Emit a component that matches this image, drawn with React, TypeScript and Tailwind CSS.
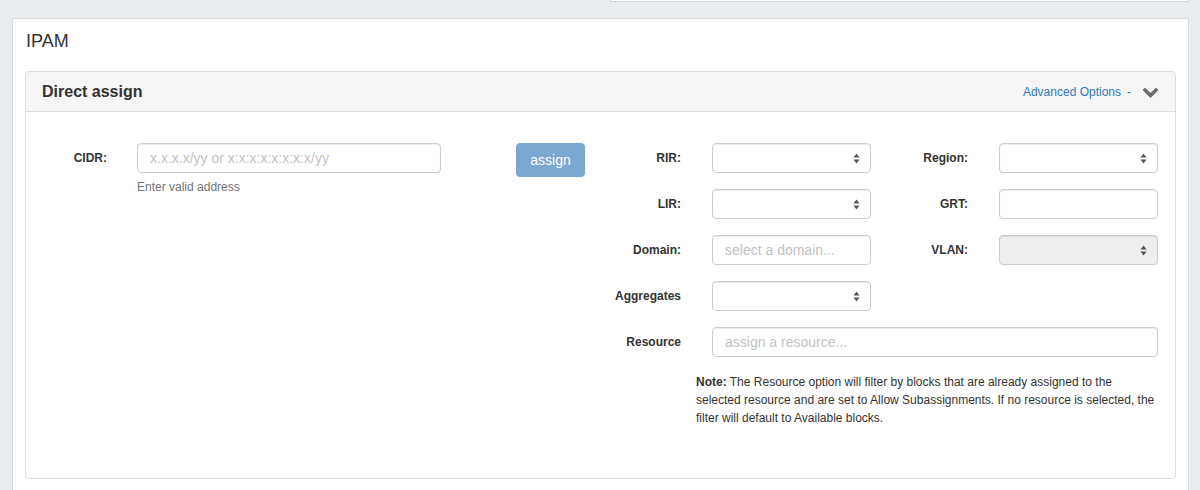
import React from "react";

const font = { fontFamily: '"Liberation Sans", Arial, Helvetica, sans-serif' };

function Arrows() {
  return (
    <svg width="7" height="11" viewBox="0 0 7 11" className="absolute right-[10px] top-[9px]">
      <path d="M0.5 4.5 L3.5 0.5 L6.5 4.5 Z" fill="#555" />
      <path d="M0.5 6.5 L3.5 10.5 L6.5 6.5 Z" fill="#555" />
    </svg>
  );
}

function Select({ disabled = false }: { disabled?: boolean }) {
  return (
    <div
      className={`relative h-[30px] rounded-[4px] border border-[#ccc] shadow-[inset_0_1px_1px_rgba(0,0,0,0.075)] ${
        disabled ? "bg-[#eeeeee]" : "bg-white"
      }`}
    >
      <Arrows />
    </div>
  );
}

function Input({ placeholder = "" }: { placeholder?: string }) {
  return (
    <div className="flex h-[30px] items-center rounded-[4px] border border-[#ccc] bg-white px-[12px] text-[14px] text-[#c2c2c2] shadow-[inset_0_1px_1px_rgba(0,0,0,0.075)]">
      {placeholder}
    </div>
  );
}

function Label({ children }: { children: React.ReactNode }) {
  return <div className="text-right text-[12px] font-bold text-[#333]">{children}</div>;
}

export default function App() {
  return (
    <div className="min-h-[490px] w-[1200px] overflow-hidden bg-[#e9edf0]" style={font}>
      <div className="ml-[610px] h-[2px] w-[579px] border-x border-b border-[#d0d4d7] bg-white" />
      <div className="ml-[12px] mt-[16px] w-[1177px] border border-[#d6dadd] bg-white px-[12px] pb-[30px] pt-[12px]">
        <div className="pl-[1px] text-[18px] leading-[20px] text-[#333]">IPAM</div>
        <div className="mt-[20px] rounded-[4px] border border-[#dddddd] bg-white">
          <div className="flex h-[40px] items-center justify-between rounded-t-[4px] border-b border-[#dddddd] bg-[#f5f5f5] pl-[16px] pr-[17px]">
            <div className="text-[16px] font-bold text-[#333]">Direct assign</div>
            <div className="flex items-center">
              <span className="text-[12px] text-[#337ab7]">Advanced Options</span>
              <span className="ml-[6px] text-[12px] text-[#337ab7]">-</span>
              <svg width="15" height="10" viewBox="0 0 15 10" className="ml-[12px] mt-[2px]">
                <path d="M2 2 L7.5 7.5 L13 2" fill="none" stroke="#6b6b6b" strokeWidth="3.4" strokeLinecap="square" strokeLinejoin="miter" />
              </svg>
            </div>
          </div>
          <div className="flex h-[366px] pt-[31px]">
            <div className="flex w-[559px] items-start">
              <div className="flex h-[30px] w-[81px] items-center justify-end">
                <Label>CIDR:</Label>
              </div>
              <div className="ml-[30px] w-[304px]">
                <Input placeholder="x.x.x.x/yy or x:x:x:x:x:x:x:x/yy" />
                <div className="mt-[7px] text-[12px] leading-[14px] text-[#737373]">Enter valid address</div>
              </div>
              <div className="ml-[75px] flex h-[34px] w-[69px] items-center justify-center rounded-[4px] border border-[#7ba6cc] bg-[#7aa8d0] text-[14px] text-white">
                assign
              </div>
            </div>
            <div className="ml-[15px] w-[558px]">
              <div className="grid grid-cols-[81px_159px_66px_159px] items-center gap-x-[31px] gap-y-[16px]">
                <Label>RIR:</Label>
                <Select />
                <Label>Region:</Label>
                <Select />

                <Label>LIR:</Label>
                <Select />
                <Label>GRT:</Label>
                <Input />

                <Label>Domain:</Label>
                <Input placeholder="select a domain..." />
                <Label>VLAN:</Label>
                <Select disabled />

                <Label>Aggregates</Label>
                <Select />
                <div />
                <div />

                <Label>Resource</Label>
                <div className="col-span-3">
                  <Input placeholder="assign a resource..." />
                </div>
              </div>
              <div className="ml-[96px] mt-[16px] whitespace-nowrap text-[12px] leading-[18px] text-[#333]">
                <b>Note:</b> The Resource option will filter by blocks that are already assigned to the
                <br />
                selected resource and are set to Allow Subassignments. If no resource is selected, the
                <br />
                filter will default to Available blocks.
              </div>
            </div>
          </div>
        </div>
      </div>
    </div>
  );
}
